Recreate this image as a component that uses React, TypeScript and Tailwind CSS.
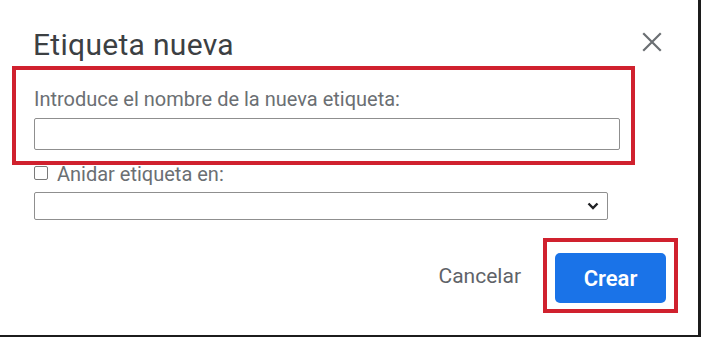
import React from "react";

function CloseIcon() {
  return (
    <svg width="20" height="20" viewBox="0 0 20 20" className="mt-[4px]">
      <path d="M2 2 L18 18 M18 2 L2 18" stroke="#6b6f73" strokeWidth="2.2" strokeLinecap="square" />
    </svg>
  );
}

function Chevron() {
  return (
    <svg width="12" height="8" viewBox="0 0 12 8">
      <path d="M1.5 1.5 L6 6 L10.5 1.5" stroke="#202124" strokeWidth="2.4" fill="none" />
    </svg>
  );
}

export default function App() {
  return (
    <div className="w-[701px] h-[337px] bg-white border-r-[3px] border-b-2 border-[#1c1c1c] font-['Roboto',sans-serif] overflow-hidden">
      {/* header */}
      <div className="flex items-start justify-between pl-[33px] pr-[36px] pt-[28px]">
        <h1 className="text-[30px] leading-[34px] tracking-[0.3px] text-[#3c4043]">Etiqueta nueva</h1>
        <CloseIcon />
      </div>

      {/* highlighted name field */}
      <div className="relative z-10 ml-[12px] mt-[4px] w-[623px] border-4 border-[#d0212e] pl-[18px] pr-[11px] pt-[19px] pb-[11px]">
        <div className="text-[20px] leading-[20px] text-[#6b6f73]">
          Introduce el nombre de la nueva etiqueta:
        </div>
        <div className="mt-[9px] h-[32px] w-full rounded-[2px] border border-[#8f8f8f] bg-white" />
      </div>

      {/* nest under */}
      <div className="-mt-[3px] flex items-start gap-[9px] pl-[34px]">
        <div className="mt-[4px] h-[14px] w-[14px] rounded-[2px] border border-[#7a7a7a]" />
        <span className="text-[20px] leading-[24px] text-[#6b6f73]">Anidar etiqueta en:</span>
      </div>
      <div className="ml-[34px] mt-[6px] flex h-[28px] w-[574px] items-center justify-end rounded-[2px] border border-[#8f8f8f] pr-[8px]">
        <Chevron />
      </div>

      {/* footer */}
      <div className="mt-[18px] flex items-center justify-end gap-[22px] pr-[20px]">
        <button className="text-[21px] leading-[24px] text-[#5f6368]">Cancelar</button>
        <div className="border-4 border-[#d0212e] pl-[8px] pr-[8px] pt-[11px] pb-[6px]">
          <button className="flex h-[50px] w-[111px] items-center justify-center rounded-[5px] bg-[#1a73e8] text-[22px] font-semibold text-white">
            Crear
          </button>
        </div>
      </div>
    </div>
  );
}
